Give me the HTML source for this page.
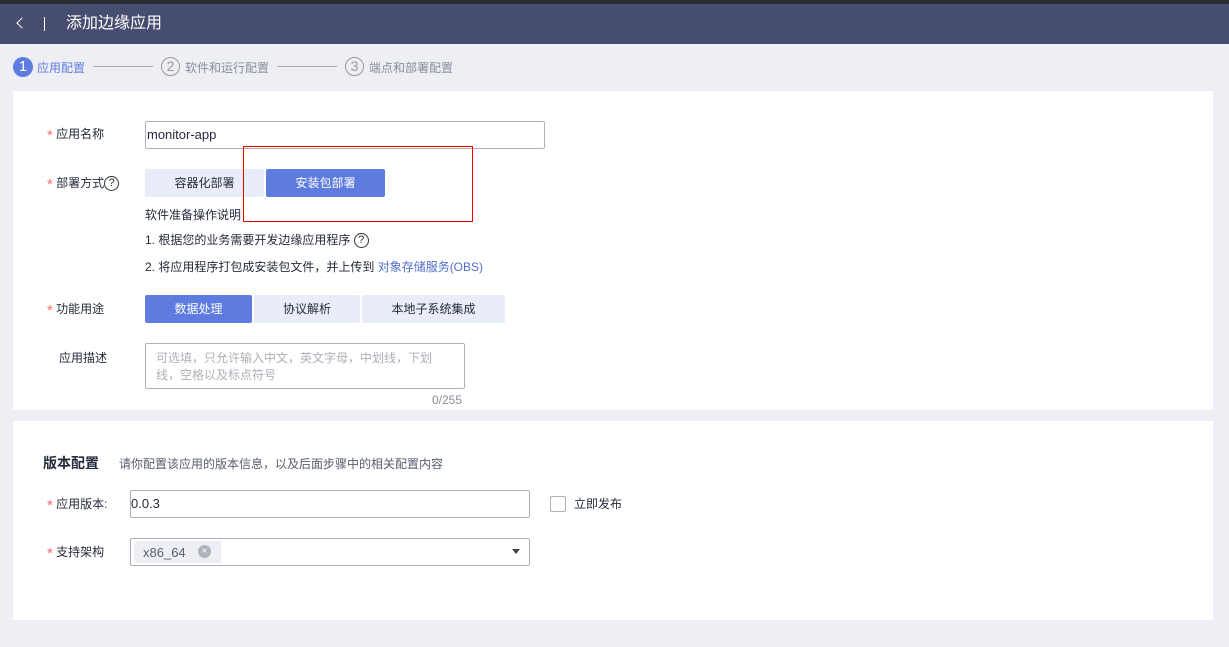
<!DOCTYPE html><html><head><meta charset="utf-8"><style>
*{margin:0;padding:0;box-sizing:border-box}
body{width:1229px;height:647px;background:#eeeff4;font-family:"Liberation Sans","Noto Sans CJK SC",sans-serif;font-size:12px;color:#252b3a;position:relative;overflow:hidden}
.a{position:absolute}
.star{color:#f66f6a;font-size:15px;vertical-align:-2px}
.lbl{font-size:12px;color:#252b3a}
.btn{position:absolute;height:28px;line-height:28px;text-align:center;font-size:12px;border-radius:2px}
.q{display:inline-block;width:15px;height:15px;border:1.2px solid #333;border-radius:50%;font-size:11px;line-height:13px;text-align:center;vertical-align:1px}
</style></head><body>
<div class="a" style="left:0;top:0;width:1229px;height:4px;background:#2b2c33"></div>
<div class="a" style="left:0;top:4px;width:1229px;height:40px;background:#474d6e"></div>
<div class="a" style="left:18px;top:19px;width:8px;height:8px;border-left:1.3px solid #fff;border-bottom:1.3px solid #fff;transform:rotate(45deg)"></div>
<div class="a" style="left:44px;top:17px;width:1px;height:14px;background:#fff"></div>
<div class="a" style="left:66px;top:13px;color:#fff;font-size:16px;line-height:22px">添加边缘应用</div>

<div class="a" style="left:13px;top:57px;width:20px;height:20px;border-radius:50%;background:#5e7ce0;color:#fff;font-size:15px;line-height:20px;text-align:center">1</div>
<div class="a" style="left:37px;top:59px;color:#5e7ce0;font-size:12px">应用配置</div>
<div class="a" style="left:93px;top:66px;width:60px;height:1px;background:#aaa"></div>
<div class="a" style="left:161px;top:57px;width:19px;height:19px;border-radius:50%;border:1px solid #999;color:#999;font-size:14px;line-height:17px;text-align:center">2</div>
<div class="a" style="left:185px;top:59px;color:#8a8e99">软件和运行配置</div>
<div class="a" style="left:277px;top:66px;width:60px;height:1px;background:#aaa"></div>
<div class="a" style="left:345px;top:57px;width:19px;height:19px;border-radius:50%;border:1px solid #999;color:#999;font-size:14px;line-height:17px;text-align:center">3</div>
<div class="a" style="left:369px;top:59px;color:#8a8e99">端点和部署配置</div>

<div class="a" style="left:13px;top:91px;width:1200px;height:319px;background:#fff"></div>
<div class="a lbl" style="left:47px;top:125px"><span class="star">*</span> 应用名称</div>
<div class="a" style="left:145px;top:121px;width:400px;height:28px;border:1px solid #adb0b8;border-radius:2px;padding-left:1px;line-height:26px;font-size:13px">monitor-app</div>
<div class="a lbl" style="left:47px;top:174px"><span class="star">*</span> 部署方式<span class="q">?</span></div>
<div class="btn" style="left:145px;top:169px;width:119px;background:#e9edfa">容器化部署</div>
<div class="btn" style="left:266px;top:169px;width:119px;background:#5e7ce0;color:#fff">安装包部署</div>
<div class="a" style="left:243px;top:146px;width:230px;height:76px;border:1px solid #e00"></div>
<div class="a" style="left:145px;top:206px">软件准备操作说明</div>
<div class="a" style="left:145px;top:231px">1. 根据您的业务需要开发边缘应用程序 <span class="q">?</span></div>
<div class="a" style="left:145px;top:258px">2. 将应用程序打包成安装包文件，并上传到 <span style="color:#526ecc">对象存储服务(OBS)</span></div>
<div class="a lbl" style="left:47px;top:300px"><span class="star">*</span> 功能用途</div>
<div class="btn" style="left:145px;top:295px;width:107px;background:#5e7ce0;color:#fff">数据处理</div>
<div class="btn" style="left:254px;top:295px;width:106px;background:#e9edfa">协议解析</div>
<div class="btn" style="left:362px;top:295px;width:143px;background:#e9edfa">本地子系统集成</div>
<div class="a lbl" style="left:59px;top:349px">应用描述</div>
<div class="a" style="left:145px;top:343px;width:320px;height:46px;border:1px solid #adb0b8;border-radius:2px;padding:6px 10px;color:#adb0b8;line-height:17px">可选填，只允许输入中文，英文字母，中划线，下划线，空格以及标点符号</div>
<div class="a" style="left:432px;top:393px;color:#8a8e99">0/255</div>

<div class="a" style="left:13px;top:421px;width:1200px;height:199px;background:#fff"></div>
<div class="a" style="left:43px;top:453px;font-size:14px;font-weight:bold">版本配置</div>
<div class="a" style="left:119px;top:455px;color:#575d6c">请你配置该应用的版本信息，以及后面步骤中的相关配置内容</div>
<div class="a lbl" style="left:47px;top:495px"><span class="star">*</span> 应用版本:</div>
<div class="a" style="left:130px;top:490px;width:400px;height:28px;border:1px solid #adb0b8;border-radius:2px;line-height:26px;font-size:13px">0.0.3</div>
<div class="a" style="left:550px;top:496px;width:16px;height:16px;border:1px solid #adb0b8;border-radius:2px"></div>
<div class="a" style="left:574px;top:495px">立即发布</div>
<div class="a lbl" style="left:47px;top:543px"><span class="star">*</span> 支持架构</div>
<div class="a" style="left:130px;top:538px;width:400px;height:28px;border:1px solid #adb0b8;border-radius:2px"></div>
<div class="a" style="left:134px;top:541px;width:87px;height:22px;background:#eeeff4;border-radius:2px"></div>
<div class="a" style="left:143px;top:545px;color:#575d6c;font-size:13px">x86_64</div>
<div class="a" style="left:198px;top:545px;width:13px;height:13px;border-radius:50%;background:#b0b3bb;color:#fff;font-size:10px;line-height:13px;text-align:center">×</div>
<div class="a" style="left:512px;top:549px;width:0;height:0;border-left:4px solid transparent;border-right:4px solid transparent;border-top:5px solid #444"></div>
</body></html>
